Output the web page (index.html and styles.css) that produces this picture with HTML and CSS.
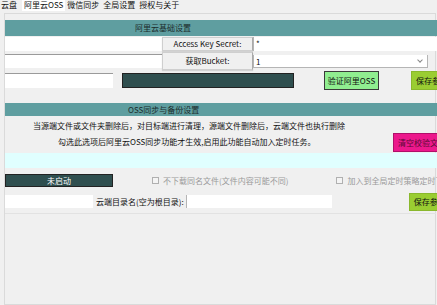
FILE: index.html
```html
<!DOCTYPE html>
<html lang="zh-CN">
<head>
    <meta charset="UTF-8">
    <title>阿里云OSS</title>
    <link rel="stylesheet" href="styles.css">
</head>
<body>
    <div class="tabs">
        <span class="tab">云盘</span>
        <span class="tab active">阿里云OSS</span>
        <span class="tab">微信同步</span>
        <span class="tab">全局设置</span>
        <span class="tab">授权与关于</span>
    </div>
    <div class="panel">
        <div class="section-title">阿里云基础设置</div>
        <div class="row row-key">
            <div class="field key-id"></div>
            <div class="label-box">Access Key Secret:</div>
            <div class="field key-secret">*</div>
        </div>
        <div class="row row-bucket">
            <div class="field bucket-left"></div>
            <div class="label-box">获取Bucket:</div>
            <div class="field select">1<span class="chevron"></span></div>
        </div>
        <div class="row row-actions">
            <div class="field endpoint"></div>
            <div class="btn btn-dark wide"></div>
            <div class="btn btn-green">验证阿里OSS</div>
            <div class="btn btn-olive">保存参数</div>
        </div>
        <div class="section-title second">OSS同步与备份设置</div>
        <p class="note first">当源端文件或文件夹删除后，对目标端进行清理，源端文件删除后，云端文件也执行删除</p>
        <div class="row note-row">
            <p class="note">勾选此选项后阿里云OSS同步功能才生效,启用此功能自动加入定时任务。</p>
            <div class="btn btn-pink">清空校验文件</div>
        </div>
        <div class="cyan-band"></div>
        <div class="row status-row">
            <div class="btn btn-dark status">未启动</div>
            <label class="check first-check"><span class="box"></span>不下载同名文件(文件内容可能不同)</label>
            <label class="check second-check"><span class="box"></span>加入到全局定时策略定时下载</label>
        </div>
        <div class="row dir-row">
            <div class="field dir-left"></div>
            <span class="dir-label">云端目录名(空为根目录):</span>
            <div class="field dir-input"></div>
            <div class="btn btn-olive save">保存参数</div>
        </div>
        <div class="divider"></div>
    </div>
</body>
</html>
```

FILE: styles.css
```css
* {
    margin: 0;
    padding: 0;
    box-sizing: border-box;
}
body {
    width: 437px;
    height: 305px;
    overflow: hidden;
    background: #f0f0f0;
    font-family: "Noto Sans CJK SC", "Liberation Sans", sans-serif;
    font-size: 8px;
    color: #111;
}
.tabs {
    display: flex;
    height: 13px;
    overflow: hidden;
}
.tab {
    height: 11px;
    line-height: 9px;
    padding: 0 2px;
    white-space: nowrap;
}
.tab:first-child {
    margin-left: -1px;
    margin-right: 3px;
}
.tab.active {
    background: #fff;
}
.panel {
    margin-left: 4px;
    width: 432px;
    height: 292px;
    border: 1px solid #dadada;
    padding-top: 6px;
}
.section-title {
    width: 460px;
    height: 16px;
    line-height: 16px;
    background: #5f9ea0;
    padding-left: 130px;
    color: #1b2b2b;
}
.section-title.second {
    margin-top: 13px;
    height: 13px;
    line-height: 13px;
    padding-left: 123px;
}
.row {
    display: flex;
    align-items: flex-start;
    width: 470px;
}
.field {
    background: #fff;
    height: 14px;
    line-height: 13px;
    padding-left: 2px;
}
.label-box {
    background: #f0f0f0;
    border: 1px solid #cfcfcf;
    border-right-color: #a9a9a9;
    box-shadow: 0 1px 1px rgba(0, 0, 0, 0.12);
    text-align: center;
    white-space: nowrap;
}
.row-key {
    margin-top: 1px;
    height: 14px;
}
.row-key .key-id {
    width: 157px;
}
.row-key .label-box {
    width: 91px;
    height: 14px;
    line-height: 12px;
}
.row-key .key-secret {
    flex: 1;
    border-left: 1px solid #b5b5b5;
}
.row-bucket {
    margin-top: 1px;
    height: 18px;
}
.bucket-left {
    width: 157px;
    margin-top: 2px;
    border-top: 1px solid #9a9a9a;
}
.row-bucket .label-box {
    width: 91px;
    height: 18px;
    line-height: 16px;
}
.select {
    position: relative;
    width: 175px;
    height: 13px;
    margin-top: 3px;
    border: 1px solid #b5b5b5;
    border-top: none;
}
.chevron {
    position: absolute;
    right: 5px;
    top: 3px;
    width: 4px;
    height: 4px;
    border-right: 1px solid #888;
    border-bottom: 1px solid #888;
    transform: rotate(45deg);
}
.row-actions {
    height: 20px;
}
.endpoint {
    width: 108px;
    height: 15px;
    margin-top: 3px;
    border-top: 1px solid #9a9a9a;
}
.btn {
    text-align: center;
    white-space: nowrap;
    border: 1px solid #222;
}
.btn-dark {
    background: #2f4f4f;
    color: #fff;
}
.wide {
    width: 172px;
    height: 15px;
    margin-top: 3px;
    margin-left: 9px;
}
.btn-green {
    background: #90ee90;
    width: 55px;
    height: 19px;
    line-height: 17px;
    margin-top: 1px;
    margin-left: 30px;
    border-color: #3a3a3a;
}
.btn-olive {
    background: #9acd32;
    width: 60px;
    height: 19px;
    line-height: 17px;
    margin-top: 1px;
    margin-left: 32px;
    border-color: #8ab82d;
    text-align: left;
    padding-left: 4px;
}
.note {
    line-height: 12px;
    white-space: nowrap;
}
.note.first {
    margin-top: 4px;
    padding-left: 28px;
}
.note-row {
    height: 20px;
}
.note-row .note {
    width: 388px;
    line-height: 20px;
    padding-left: 53px;
}
.btn-pink {
    background: #ec188c;
    color: #5a0a35;
    width: 56px;
    height: 19px;
    line-height: 17px;
    margin-top: 1px;
    border-color: #b0106a;
    text-align: left;
    padding-left: 4px;
}
.cyan-band {
    margin-top: 1px;
    height: 15px;
    width: 440px;
    background: #e0ffff;
}
.status-row {
    margin-top: 6px;
    height: 13px;
}
.status {
    width: 108px;
    height: 13px;
    line-height: 11px;
}
.check {
    display: flex;
    align-items: center;
    height: 13px;
    color: #9a9a9a;
    white-space: nowrap;
}
.first-check {
    margin-left: 39px;
}
.second-check {
    margin-left: 48px;
}
.box {
    width: 7px;
    height: 7px;
    border: 1px solid #b0b0b0;
    background: #f4f4f4;
    margin-right: 4px;
}
.dir-row {
    margin-top: 6px;
    height: 18px;
}
.dir-left {
    width: 88px;
    height: 13px;
    margin-top: 2px;
}
.dir-label {
    margin-left: 3px;
    line-height: 18px;
    white-space: nowrap;
}
.dir-input {
    width: 146px;
    height: 13px;
    margin-top: 2px;
    margin-left: 2px;
    border-left: 1px solid #b5b5b5;
}
.save {
    margin-top: 0;
    height: 18px;
    line-height: 16px;
    margin-left: 77px;
}
.divider {
    margin-top: 2px;
    height: 1px;
    width: 431px;
    background: #e2e2e2;
}
```
